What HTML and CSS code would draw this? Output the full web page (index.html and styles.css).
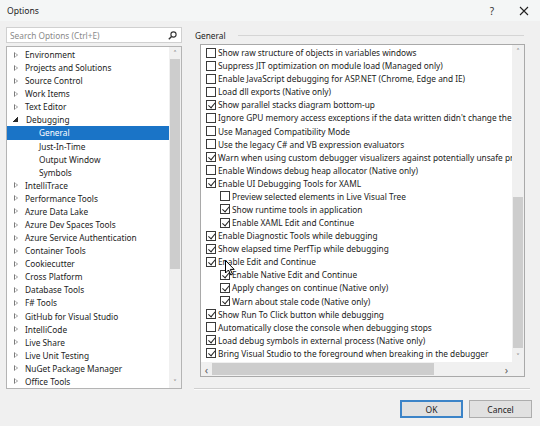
FILE: index.html
```html
<!DOCTYPE html>
<html>
<head>
<meta charset="utf-8">
<link rel="stylesheet" href="styles.css">
</head>
<body>
<div class="window">
  <div class="titlebar">
    <span class="title">Options</span>
    <span class="help">?</span>
    <span class="close"><svg width="10" height="10" viewBox="0 0 10 10"><path d="M1 1L9 9M9 1L1 9" stroke="#222" stroke-width="1.1"/></svg></span>
  </div>
  <div class="content">
    <div class="left">
      <div class="search">
        <span class="search-text">Search Options (Ctrl+E)</span>
        <svg class="search-icon" width="9" height="9" viewBox="0 0 9 9"><circle cx="5.5" cy="3.5" r="2.6" fill="none" stroke="#333" stroke-width="1.1"/><path d="M3.6 5.4L0.8 8.2" stroke="#333" stroke-width="1.4"/></svg>
      </div>
      <div class="tree">
        <div class="tree-list">
          <div class="node"><i class="tri"></i>Environment</div>
          <div class="node"><i class="tri"></i>Projects and Solutions</div>
          <div class="node"><i class="tri"></i>Source Control</div>
          <div class="node"><i class="tri"></i>Work Items</div>
          <div class="node"><i class="tri"></i>Text Editor</div>
          <div class="node"><i class="tri open"></i>Debugging</div>
          <div class="node child selected">General</div>
          <div class="node child">Just-In-Time</div>
          <div class="node child">Output Window</div>
          <div class="node child">Symbols</div>
          <div class="node"><i class="tri"></i>IntelliTrace</div>
          <div class="node"><i class="tri"></i>Performance Tools</div>
          <div class="node"><i class="tri"></i>Azure Data Lake</div>
          <div class="node"><i class="tri"></i>Azure Dev Spaces Tools</div>
          <div class="node"><i class="tri"></i>Azure Service Authentication</div>
          <div class="node"><i class="tri"></i>Container Tools</div>
          <div class="node"><i class="tri"></i>Cookiecutter</div>
          <div class="node"><i class="tri"></i>Cross Platform</div>
          <div class="node"><i class="tri"></i>Database Tools</div>
          <div class="node"><i class="tri"></i>F# Tools</div>
          <div class="node"><i class="tri"></i>GitHub for Visual Studio</div>
          <div class="node"><i class="tri"></i>IntelliCode</div>
          <div class="node"><i class="tri"></i>Live Share</div>
          <div class="node"><i class="tri"></i>Live Unit Testing</div>
          <div class="node"><i class="tri"></i>NuGet Package Manager</div>
          <div class="node"><i class="tri"></i>Office Tools</div>
        </div>
        <div class="vscroll tree-scroll">
          <span class="sb-btn">&#x2C4;</span>
          <div class="sb-track"><div class="sb-thumb"></div></div>
          <span class="sb-btn">&#x2C5;</span>
        </div>
      </div>
    </div>
    <div class="right">
      <div class="group-head"><span class="group-title">General</span><span class="rule"></span></div>
      <div class="panel">
        <div class="panel-main">
          <div class="opts">
            <div class="opt"><i class="cb"></i>Show raw structure of objects in variables windows</div>
            <div class="opt"><i class="cb"></i>Suppress JIT optimization on module load (Managed only)</div>
            <div class="opt"><i class="cb"></i>Enable JavaScript debugging for ASP.NET (Chrome, Edge and IE)</div>
            <div class="opt"><i class="cb"></i>Load dll exports (Native only)</div>
            <div class="opt"><i class="cb on"></i>Show parallel stacks diagram bottom-up</div>
            <div class="opt"><i class="cb"></i>Ignore GPU memory access exceptions if the data written didn't change the value</div>
            <div class="opt"><i class="cb"></i>Use Managed Compatibility Mode</div>
            <div class="opt"><i class="cb"></i>Use the legacy C# and VB expression evaluators</div>
            <div class="opt"><i class="cb on"></i>Warn when using custom debugger visualizers against potentially unsafe processes</div>
            <div class="opt"><i class="cb"></i>Enable Windows debug heap allocator (Native only)</div>
            <div class="opt"><i class="cb on"></i>Enable UI Debugging Tools for XAML</div>
            <div class="opt sub"><i class="cb"></i>Preview selected elements in Live Visual Tree</div>
            <div class="opt sub"><i class="cb on"></i>Show runtime tools in application</div>
            <div class="opt sub"><i class="cb on"></i>Enable XAML Edit and Continue</div>
            <div class="opt"><i class="cb on"></i>Enable Diagnostic Tools while debugging</div>
            <div class="opt"><i class="cb on"></i>Show elapsed time PerfTip while debugging</div>
            <div class="opt"><i class="cb on"></i>Enable Edit and Continue</div>
            <div class="opt sub"><i class="cb on"></i>Enable Native Edit and Continue</div>
            <div class="opt sub"><i class="cb on"></i>Apply changes on continue (Native only)</div>
            <div class="opt sub"><i class="cb on"></i>Warn about stale code (Native only)</div>
            <div class="opt"><i class="cb on"></i>Show Run To Click button while debugging</div>
            <div class="opt"><i class="cb"></i>Automatically close the console when debugging stops</div>
            <div class="opt"><i class="cb on"></i>Load debug symbols in external process (Native only)</div>
            <div class="opt"><i class="cb on"></i>Bring Visual Studio to the foreground when breaking in the debugger</div>
          </div>
          <div class="vscroll panel-scroll">
            <span class="sb-btn">&#x2C4;</span>
            <div class="sb-track"><div class="sb-thumb"></div></div>
            <span class="sb-btn">&#x2C5;</span>
          </div>
        </div>
        <div class="hscroll">
          <span class="sb-btn">&#x2039;</span>
          <div class="hs-track"><div class="hs-thumb"></div></div>
          <span class="sb-btn">&#x203A;</span>
          <span class="corner"></span>
        </div>
      </div>
      <div class="sep"></div>
      <div class="buttons">
        <button class="btn default">OK</button>
        <button class="btn">Cancel</button>
      </div>
    </div>
  </div>
  <svg class="cursor" width="10" height="16" viewBox="0 0 10 16"><path d="M0.5 0.5V13L3.5 10L5.8 15L7.5 14.2L5.3 9.4H9.2Z" fill="#fff" stroke="#000" stroke-width="1" stroke-linejoin="round"/></svg>
</div>
</body>
</html>
```

FILE: styles.css
```css
* { box-sizing: border-box; }
html, body { margin: 0; padding: 0; }
body {
  width: 540px;
  height: 426px;
  overflow: hidden;
  background: #f0f0f0;
  font-family: "Noto Sans", "Open Sans", sans-serif;
  font-size: 8.3px;
  color: #1c1c1c;
}
.window {
  position: relative;
  width: 540px;
  height: 426px;
  background: #f0f0f0;
}
.titlebar {
  height: 21px;
  display: flex;
  align-items: center;
  padding-left: 7px;
  background: #f4f6f6;
}
.title { font-size: 8.6px; flex: 1; }
.help { font-size: 10px; margin-right: 25px; color: #333; }
.close { width: 10px; height: 10px; margin-right: 11px; display: flex; }

.content {
  display: grid;
  grid-template-columns: 176px 338px;
  column-gap: 12px;
  padding: 6px 0 0 6px;
}
.left { display: flex; flex-direction: column; }
.search {
  height: 16px;
  background: #fff;
  border: 1px solid #d0d0d0;
  display: flex;
  align-items: center;
  padding: 0 4px 0 3px;
}
.search-text { flex: 1; color: #8a8a8a; }

.tree {
  margin-top: 3px;
  height: 343px;
  background: #fff;
  border: 1px solid #b4b4b4;
  display: flex;
}
.tree-list { flex: 1; padding-top: 1px; }
.node {
  height: 13.08px;
  line-height: 13.08px;
  display: flex;
  align-items: center;
  padding-left: 7px;
  white-space: nowrap;
}
.node.child { padding-left: 32px; }
.node.selected { background: #1a74c7; color: #fff; }
.tri {
  width: 0; height: 0;
  margin-right: 7px;
  position: relative;
  border-left: 4px solid #7a7a7a;
  border-top: 3.5px solid transparent;
  border-bottom: 3.5px solid transparent;
}
.tri::after {
  content: "";
  position: absolute;
  left: -3px; top: -2px;
  border-left: 2.2px solid #fff;
  border-top: 2px solid transparent;
  border-bottom: 2px solid transparent;
}
.tri.open {
  border: none;
  width: 5px; height: 5px;
  margin-left: -1px;
  margin-right: 8px;
  background: linear-gradient(135deg, transparent 50%, #2a2a2a 50%);
}
.tri.open::after { display: none; }

.vscroll {
  width: 12px;
  display: flex;
  flex-direction: column;
  background: #f0f0f0;
}
.sb-btn {
  height: 12px;
  display: flex;
  align-items: center;
  justify-content: center;
  font-size: 9px;
  color: #606060;
  line-height: 1;
}
.sb-track { flex: 1; position: relative; }
.tree-scroll .sb-thumb { margin: 0 1px; height: 210px; background: #cdcdcd; }
.panel-scroll .sb-thumb { margin: 140px 1px 0; height: 151px; background: #cdcdcd; }

.right { display: flex; flex-direction: column; }
.group-head {
  height: 17px;
  display: flex;
  align-items: center;
  padding-left: 1px;
}
.group-title { margin-right: 12px; }
.rule { flex: 1; height: 1px; background: #d5d5d5; margin-right: 8px; }

.panel {
  margin-left: 6px;
  width: 325px;
  height: 333px;
  background: #fff;
  border: 1px solid #a9a9a9;
  display: flex;
  flex-direction: column;
}
.panel-main { flex: 1; display: flex; min-height: 0; }
.opts { flex: 1; overflow: hidden; padding-top: 1px; }
.opt {
  height: 13.08px;
  display: flex;
  align-items: center;
  padding-left: 5px;
  white-space: nowrap;
}
.opt.sub { padding-left: 19px; }
.cb {
  flex: none;
  width: 10px;
  height: 10px;
  border: 1px solid #3a3a3a;
  background: #fff;
  margin-right: 2px;
  position: relative;
}
.cb.on::after {
  content: "";
  position: absolute;
  left: 2.5px; top: 0px;
  width: 3px; height: 5.5px;
  border-right: 1.1px solid #222;
  border-bottom: 1.1px solid #222;
  transform: rotate(40deg);
}
.hscroll {
  height: 14px;
  display: flex;
  align-items: center;
  background: #f0f0f0;
}
.hscroll .sb-btn { width: 11px; height: 14px; font-size: 11px; }
.hs-track { flex: 1; height: 12px; }
.hs-thumb { width: 222px; height: 12px; background: #cdcdcd; }
.corner { width: 12px; height: 14px; background: #f0f0f0; }

.sep {
  margin-top: 11px;
  width: 336px;
  height: 2px;
  border-top: 1px solid #cfcfcf;
  border-bottom: 1px solid #fbfbfb;
}
.buttons {
  margin-top: 10px;
  display: flex;
  justify-content: flex-end;
  gap: 6px;
}
.btn {
  width: 63px;
  height: 18px;
  font-family: "Noto Sans", "Open Sans", sans-serif;
  font-size: 8.5px;
  color: #1c1c1c;
  background: #e1e1e1;
  border: 1px solid #adadad;
  padding: 0;
}
.btn.default { border: 2px solid #3c84c8; }

.cursor { position: absolute; left: 225px; top: 260px; }
```
